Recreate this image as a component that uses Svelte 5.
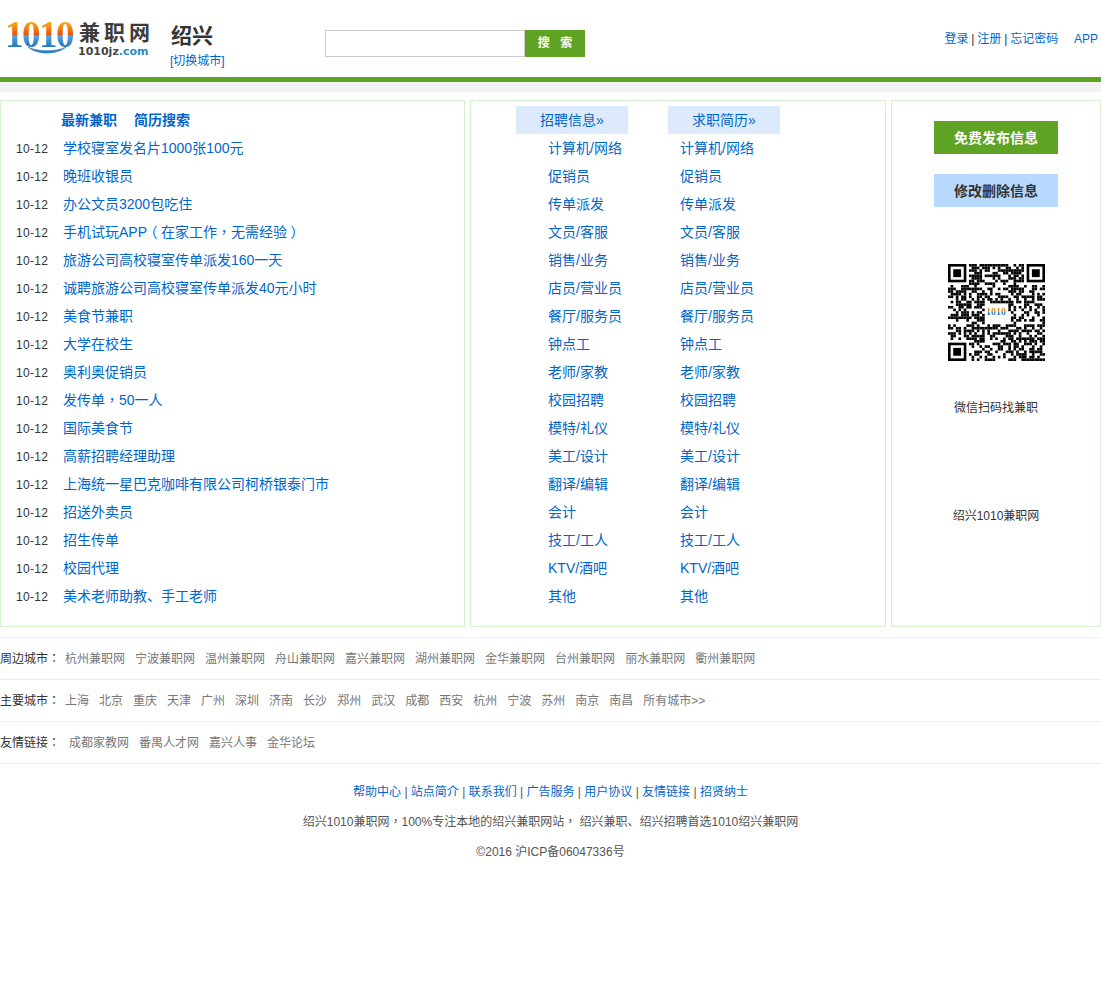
<script>
  const jobs = ['学校寝室发名片1000张100元','晚班收银员','办公文员3200包吃住','手机试玩APP（在家工作，无需经验）','旅游公司高校寝室传单派发160一天','诚聘旅游公司高校寝室传单派发40元小时','美食节兼职','大学在校生','奥利奥促销员','发传单，50一人','国际美食节','高薪招聘经理助理','上海统一星巴克咖啡有限公司柯桥银泰门市','招送外卖员','招生传单','校园代理','美术老师助教、手工老师'];
  const cats = ['计算机/网络','促销员','传单派发','文员/客服','销售/业务','店员/营业员','餐厅/服务员','钟点工','老师/家教','校园招聘','模特/礼仪','美工/设计','翻译/编辑','会计','技工/工人','KTV/酒吧','其他'];
  const near = ['杭州','宁波','温州','舟山','嘉兴','湖州','金华','台州','丽水','衢州'].map(c => c + '兼职网');
  const main = ['上海','北京','重庆','天津','广州','深圳','济南','长沙','郑州','武汉','成都','西安','杭州','宁波','苏州','南京','南昌','所有城市>>'];
  const friends = ['成都家教网','番禺人才网','嘉兴人事','金华论坛'];
  const foot = ['帮助中心','站点简介','联系我们','广告服务','用户协议','友情链接','招贤纳士'];
  const parts = (s) => s.split(/([，：（）])/).filter(Boolean);
  const cls = (p) => (p === '（' || p === '）' ? 'paren' : p === '，' || p === '：' ? 'mid' : '');

  const N = 37;
  let seed = 20160;
  const rnd = () => (seed = (seed * 1103515245 + 12345) & 0x7fffffff) / 0x7fffffff;
  const inFinder = (x, y) => (x < 8 && y < 8) || (x >= N - 8 && y < 8) || (x < 8 && y >= N - 8);
  const inLogo = (x, y) => x >= 14 && x <= 22 && y >= 15 && y <= 22;
  const cells = [];
  for (let y = 0; y < N; y++) for (let x = 0; x < N; x++) {
    if (!inFinder(x, y) && !inLogo(x, y) && rnd() > 0.48) cells.push([x, y]);
  }
  const finders = [[0, 0], [N - 7, 0], [0, N - 7]];
</script>

{#snippet txt(s)}{#each parts(s) as p}{#if cls(p)}<span class={cls(p)}>{p}</span>{:else}{p}{/if}{/each}{/snippet}

<header class="top">
  <div class="logo">
    <span class="digits">1010</span>
    <svg class="smile" viewBox="0 0 38 7" width="38" height="7" aria-hidden="true"><path d="M0 0 C9 8 29 8 38 0 C29 5 9 5 0 0Z" fill="#2b7cc0" stroke="#2b7cc0" stroke-width=".6"/></svg>
    <div class="brand">
      <b>兼职网</b>
      <small>1010jz<span>.com</span></small>
    </div>
  </div>
  <div class="city">
    <strong>绍兴</strong>
    <a href="#c">[切换城市]</a>
  </div>
  <div class="search">
    <input type="text" aria-label="搜索" />
    <button>搜 索</button>
  </div>
  <nav class="user">
    <a href="#l">登录</a> | <a href="#r">注册</a> | <a href="#f">忘记密码</a>
    <a class="app" href="#a">APP</a>
  </nav>
</header>
<div class="bar"></div>

<main class="panels">
  <section class="panel news">
    <div class="news-head"><a href="#n">最新兼职</a><a href="#s">简历搜索</a></div>
    {#each jobs as j}
      <div class="row"><span class="date">10-12</span><a href="#j">{@render txt(j)}</a></div>
    {/each}
  </section>

  <section class="panel cats">
    <div class="col first">
      <a class="tab" href="#z">招聘信息»</a>
      {#each cats as c}<a class="cat" href="#c">{c}</a>{/each}
    </div>
    <div class="col second">
      <a class="tab" href="#q">求职简历»</a>
      {#each cats as c}<a class="cat" href="#c">{c}</a>{/each}
    </div>
  </section>

  <aside class="panel side">
    <a class="btn green" href="#p">免费发布信息</a>
    <a class="btn blue" href="#e">修改删除信息</a>
    <div class="qr">
      <svg viewBox="0 0 37 37" width="97" height="97" aria-label="二维码">
        {#each cells as [x, y]}<rect {x} {y} width="1" height="1" fill="#000" />{/each}
        {#each finders as [x, y]}
          <rect x={x + 0.5} y={y + 0.5} width="6" height="6" fill="none" stroke="#000" />
          <rect x={x + 2} y={y + 2} width="3" height="3" fill="#000" />
        {/each}
      </svg>
      <span class="qr-logo">1010</span>
    </div>
    <p class="cap1">微信扫码找兼职</p>
    <p class="cap2">绍兴1010兼职网</p>
  </aside>
</main>

<section class="links">
  <div class="line"><span class="label">{@render txt('周边城市：')}</span><div class="items near">{#each near as n}<a href="#x">{n}</a>{/each}</div></div>
  <div class="line"><span class="label">{@render txt('主要城市：')}</span><div class="items near">{#each main as n}<a href="#x">{n}</a>{/each}</div></div>
  <div class="line"><span class="label">{@render txt('友情链接：')}</span><div class="items friends">{#each friends as n}<a href="#x">{n}</a>{/each}</div></div>
</section>

<footer class="foot">
  <p>{#each foot as f, i}{#if i}{' | '}{/if}<a href="#h">{f}</a>{/each}</p>
  <p>{@render txt('绍兴1010兼职网，100%专注本地的绍兴兼职网站， 绍兴兼职、绍兴招聘首选1010绍兴兼职网')}</p>
  <p>©2016 沪ICP备06047336号</p>
</footer>

<style>
  :global(body) {
    margin: 0;
    background: #fff;
    color: #333;
    font: 12px/1.5 "Liberation Sans", "Noto Sans CJK SC", sans-serif;
  }
  a { color: #0066cc; text-decoration: none; }
  .mid { font-family: "Noto Sans CJK TC", sans-serif; line-height: 0; }
  .paren {
    display: inline-block; width: 1em; line-height: 0; text-align: center;
    font-feature-settings: "halt";
  }

  .top { position: relative; display: flex; height: 77px; width: 1101px; }
  .logo { position: relative; width: 171px; flex: none; height: 77px; }
  .digits {
    position: absolute; left: 5px; top: 15px;
    font: bold 37px/40px "Liberation Serif", serif;
    letter-spacing: -1.5px;
    background: linear-gradient(#f5a81c 20%, #e8500f 50%, #58a6e0 52%, #2b7cc0 75%);
    -webkit-background-clip: text; background-clip: text; color: transparent;
  }
  .smile { position: absolute; left: 28px; top: 47px; }
  .brand { position: absolute; left: 79px; top: 20px; width: 80px; }
  .brand b { display: block; font-size: 21px; line-height: 25px; color: #3b3b3b; letter-spacing: 4px; white-space: nowrap; }
  .brand small { display: block; font: bold 11px/13px "DejaVu Sans", sans-serif; color: #444; margin-left: -1px; }
  .brand small span { color: #2b8ac6; }
  .city { width: 154px; flex: none; padding-top: 20px; display: flex; flex-direction: column; }
  .city strong { font-size: 21px; line-height: 31px; color: #333; }
  .city a { line-height: 18px; margin-top: 1px; margin-left: -1px; }
  .search { display: flex; margin-top: 30px; height: 27px; }
  .search input { box-sizing: border-box; width: 200px; height: 27px; border: 1px solid #ccc; background: #fff; padding: 0; margin: 0; outline: 0; }
  .search button {
    width: 60px; height: 27px; border: 0; padding: 0; background: #5fa324; color: #fff;
    font: bold 12px/27px "Liberation Sans", "Noto Sans CJK SC", sans-serif; word-spacing: 7px;
  }
  .user { position: absolute; right: 3px; top: 30px; line-height: 18px; color: #333; white-space: nowrap; word-spacing: -.5px; }
  .app { margin-left: 13px; }
  .bar { height: 10px; background: #f2f2f2; border-top: 5px solid #5fa324; margin-bottom: 8px; }

  .panels { display: flex; gap: 5px; width: 1101px; }
  .panel { box-sizing: border-box; height: 527px; border: 1px solid #d5f0cc; flex: none; }
  .news { width: 465px; padding-top: 5px; }
  .news-head { height: 28px; line-height: 28px; padding-left: 60px; font-size: 14px; font-weight: bold; display: flex; gap: 17px; }
  .row { display: flex; height: 28px; line-height: 28px; font-size: 14px; }
  .date { width: 62px; padding: 1px 0 0 15px; box-sizing: border-box; font-size: 12px; color: #333; letter-spacing: .3px; }

  .cats { width: 416px; padding: 5px 0 0 45px; display: flex; gap: 40px; }
  .col { width: 112px; display: flex; flex-direction: column; }
  .tab { height: 28px; line-height: 28px; text-align: center; background: #dceafb; font-size: 14px; }
  .cat { height: 28px; line-height: 28px; font-size: 14px; white-space: nowrap; }
  .first .cat { padding-left: 32px; }
  .second .cat { padding-left: 12px; }

  .side { width: 210px; display: flex; flex-direction: column; align-items: center; padding-top: 20px; }
  .btn { width: 124px; height: 33px; line-height: 34px; text-align: center; font-size: 14px; font-weight: bold; }
  .green { background: #5fa324; color: #fff; }
  .blue { background: #b8d9ff; color: #333; margin-top: 20px; }
  .qr { position: relative; width: 97px; height: 97px; margin-top: 57px; }
  .qr svg { display: block; }
  .qr-logo {
    position: absolute; left: 36px; top: 38px; width: 25px; height: 21px; border-radius: 2px;
    font: bold 10px/20px "Liberation Serif", serif; text-align: center;
    background-color: #fff;
    background-image: linear-gradient(#e88a1c 45%, #2b7cc0 50%);
    -webkit-background-clip: text; background-clip: text; color: transparent;
  }
  .side p { margin: 0; line-height: 18px; color: #333; }
  .cap1 { margin-top: 38px !important; }
  .cap2 { margin-top: 90px !important; }

  .links { margin-top: 10px; border-top: 1px solid #eee; }
  .line { display: flex; align-items: center; height: 41px; border-bottom: 1px solid #eee; white-space: nowrap; }
  .label { color: #333; width: 60px; flex: none; }
  .items { display: flex; gap: 10px; }
  .items a { color: #777; }
  .near { margin-left: 5px; }
  .friends { margin-left: 9px; }

  .foot { text-align: center; color: #555; padding-top: 13px; }
  .foot p { margin: 0; line-height: 30px; }
</style>
